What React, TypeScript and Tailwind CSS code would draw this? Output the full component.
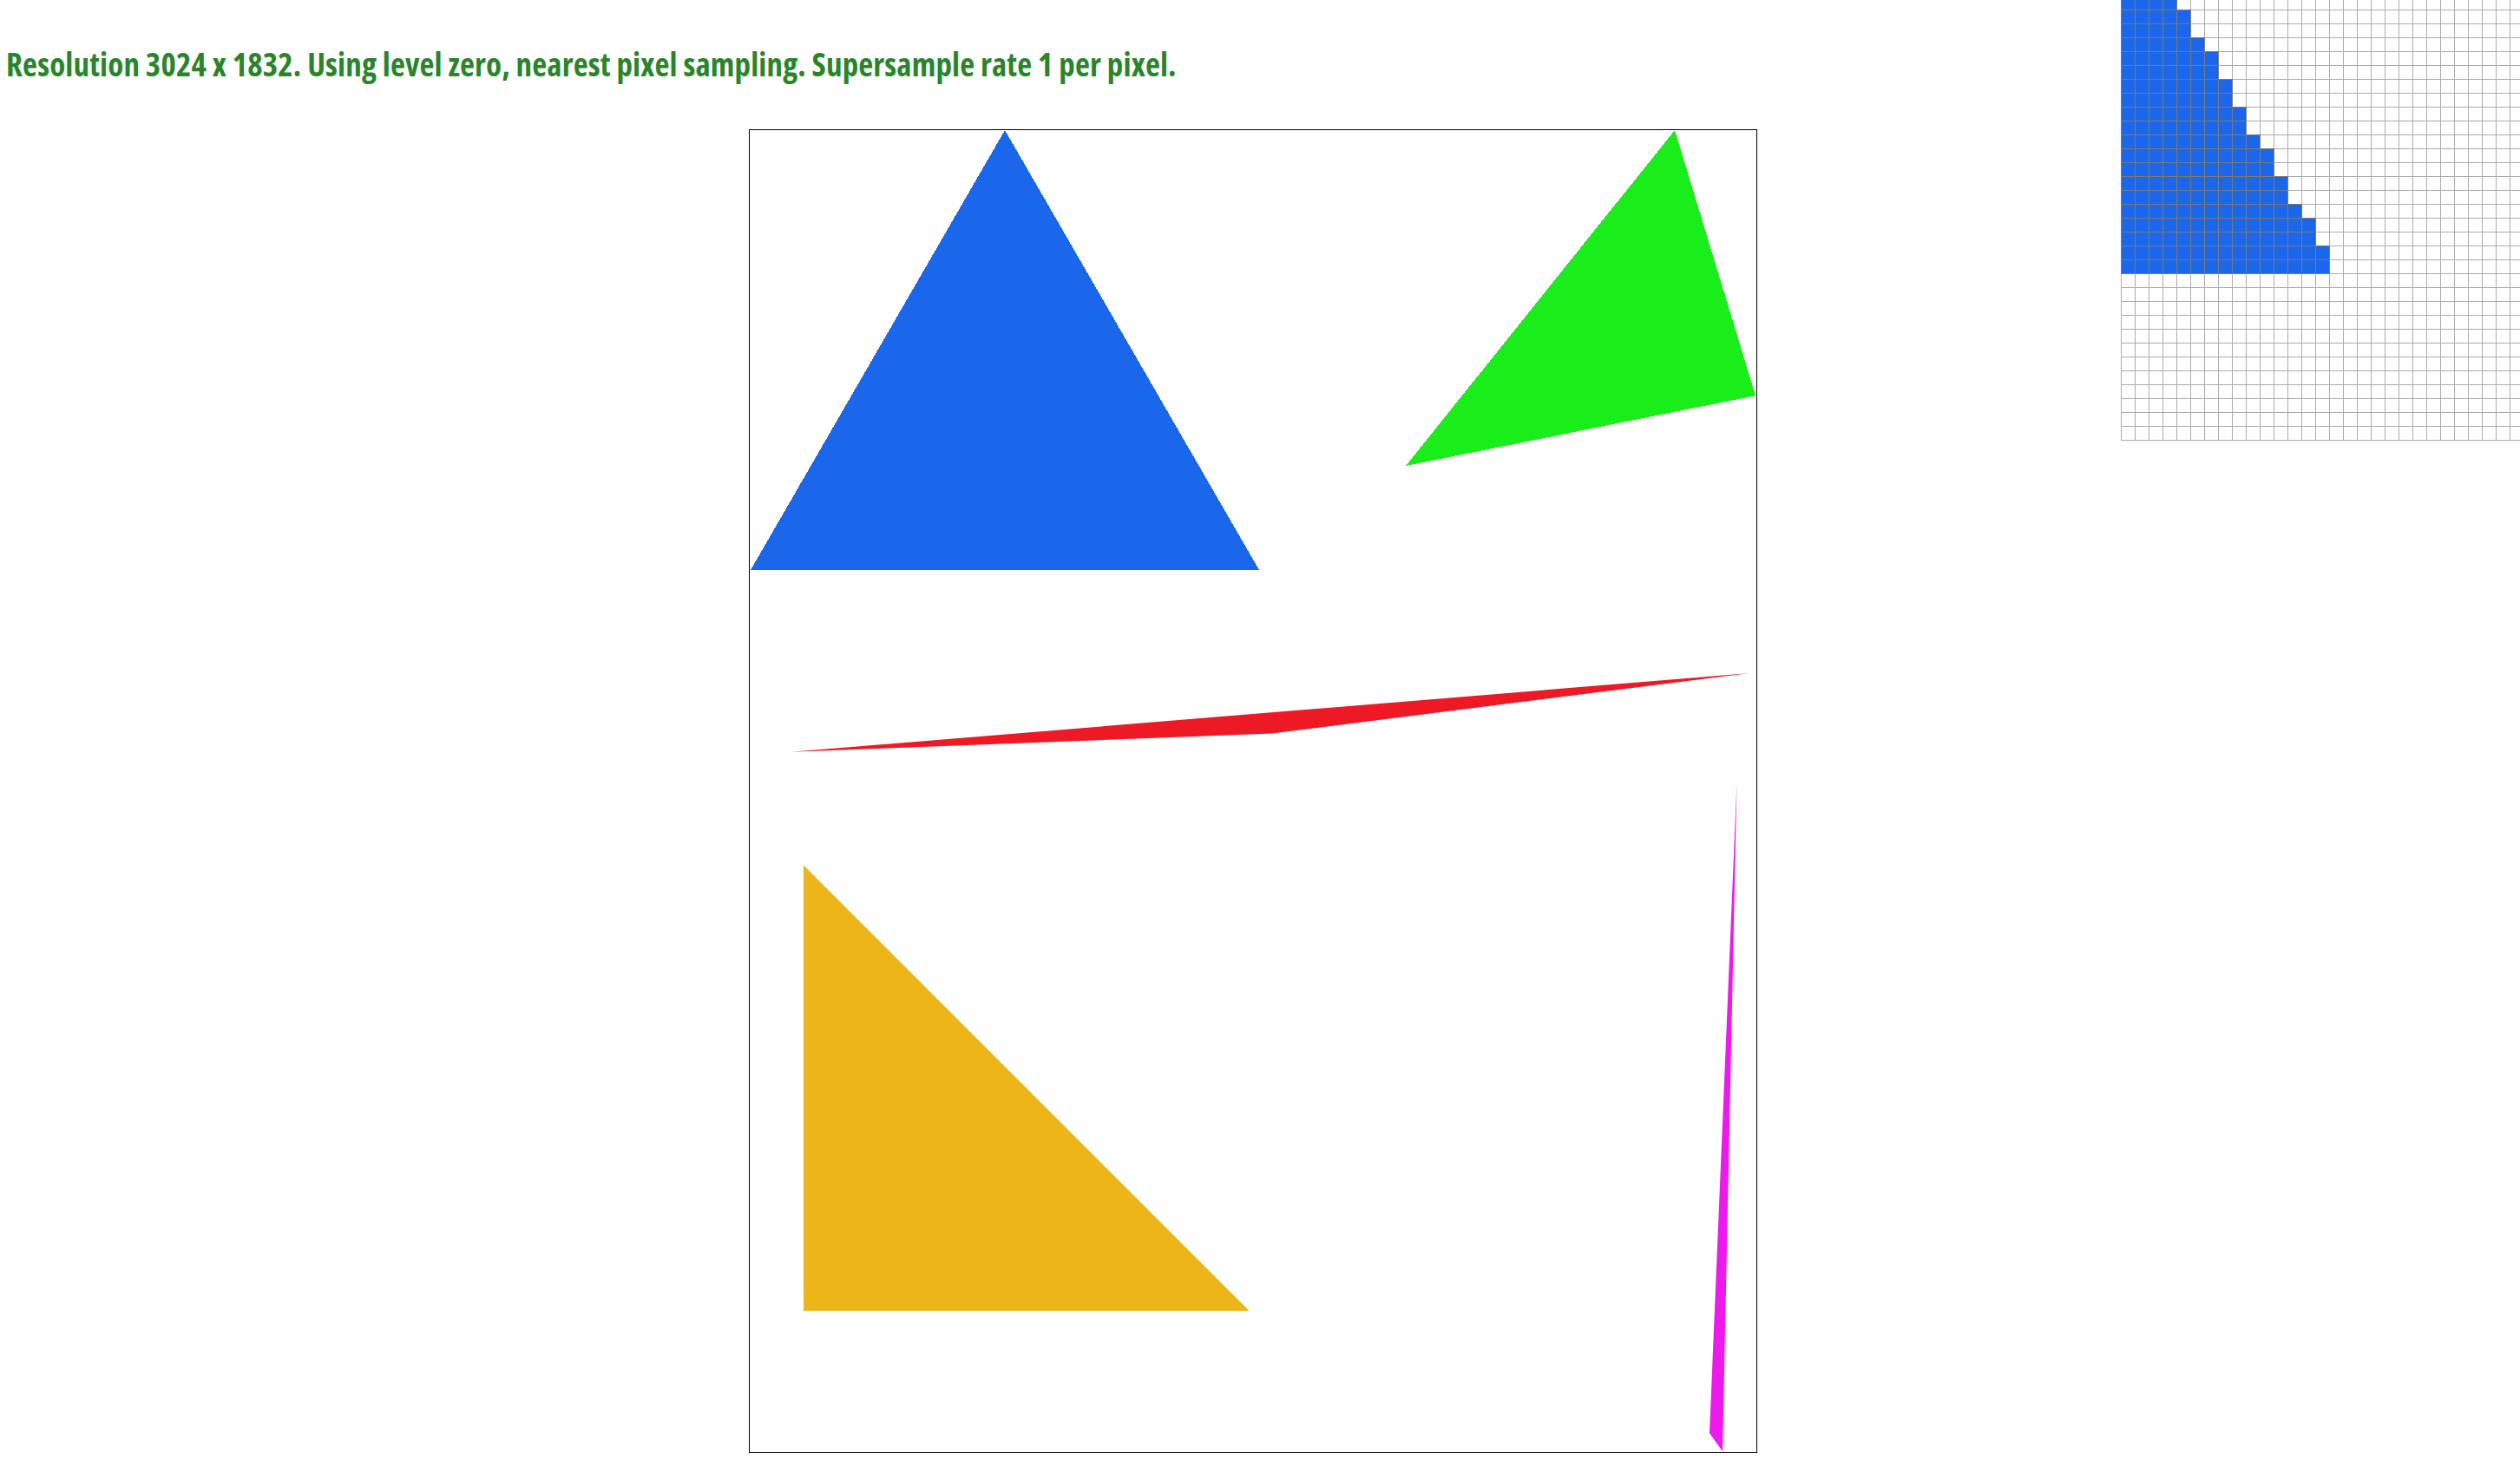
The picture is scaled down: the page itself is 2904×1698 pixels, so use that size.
import React from 'react';

type Tri = { fill: string; points: string; thin?: boolean };

// vertices in frame-local pixels (inside the 1px border)
const triangles: Tri[] = [
  { fill: '#1b67eb', points: '294,0 1,507 587,507' },
  { fill: '#1aee1a', points: '1066,0 1159,306 756,387' },
  { fill: '#ed1924', points: '48,716.8 1152,626 602,695.5', thin: true },
  { fill: '#ecb519', points: '62,848 62,1361 575,1361' },
  { fill: '#ed19ed', points: '1137.5,752 1106,1502 1121,1523', thin: true },
];

// filled cells per row of the magnified view
const blueRuns = [4, 5, 5, 6, 7, 7, 8, 8, 9, 9, 10, 11, 11, 12, 12, 13, 14, 14, 15, 15];
const CELL = 16;
const N = 32;

function PixelZoom() {
  const white: React.ReactNode[] = [];
  const blue: React.ReactNode[] = [];
  for (let r = 0; r < N; r++) {
    const run = blueRuns[r] ?? 0;
    for (let c = 0; c < N; c++) {
      const x = c * CELL + 0.5;
      const y = r * CELL + 0.5;
      if (c < run) {
        blue.push(
          <rect key={`b${r}-${c}`} x={x} y={y} width={CELL} height={CELL} fill="#1b67eb" stroke="#7a7a7a" strokeWidth={1} />
        );
      } else {
        white.push(
          <rect key={`w${r}-${c}`} x={x} y={y} width={CELL} height={CELL} fill="#ffffff" stroke="#ababab" strokeWidth={1} />
        );
      }
    }
  }
  return (
    <svg width={N * CELL + 1} height={N * CELL + 1} shapeRendering="crispEdges">
      {white}
      {blue}
    </svg>
  );
}

export default function App() {
  return (
    <div className="relative w-[2904px] h-[1698px] overflow-hidden bg-white">
      <div
        className="h-[149px] pt-[48px] pl-[7px] text-[37px] font-bold leading-[normal] text-[#2a842a] [font-stretch:85%] tracking-[0.15px] whitespace-nowrap"
        style={{ fontFamily: '"Open Sans", "DejaVu Sans", sans-serif' }}
      >
        Resolution 3024 x 1832. Using level zero, nearest pixel sampling. Supersample rate 1 per pixel.
      </div>

      <div className="ml-[863px] w-[1162px] h-[1526px] border border-black bg-white">
        <svg width={1160} height={1524} className="block">
          {triangles.map((t, i) => (
            <polygon
              key={i}
              points={t.points}
              fill={t.fill}
              shapeRendering={t.thin ? 'geometricPrecision' : 'crispEdges'}
            />
          ))}
        </svg>
      </div>

      {/* magnified pixel inspector */}
      <div className="absolute top-[-5px] left-[2444px]">
        <PixelZoom />
      </div>
    </div>
  );
}
